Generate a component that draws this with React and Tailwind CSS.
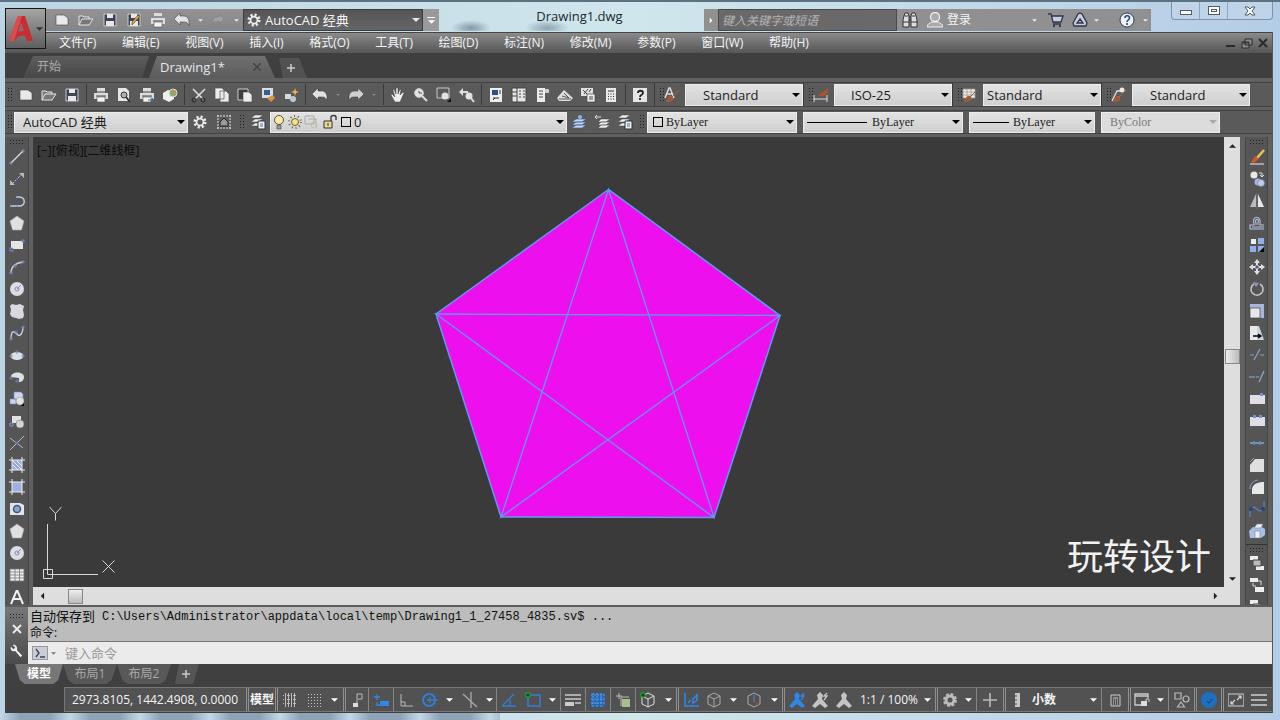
import clsx from 'clsx';

const page = <path d="M2 3h8l4 3v7H2z" fill="#e9e9e9" stroke="#444" strokeWidth=".6" />;
const folder = <path d="M1 13V4h4l1 1h5v2M1 13l3-6h11l-4 6z" fill="#777" stroke="#e4e4e4" />;
const disk = (
  <>
    <path d="M2 2h12v12H2z" fill="#3d4350" stroke="#c5cad6" />
    <path d="M5 2h6v4H5zM4 9h8v5H4z" fill="#e8e8e8" />
  </>
);
const printer = (
  <>
    <path d="M4 1h8v5H4zM1 6h14v6H1z" fill="#dcdcdc" />
    <path d="M3 9h10M4 5h8" stroke="#444" />
    <path d="M4 10h8v5H4z" fill="#f3f3f3" stroke="#555" strokeWidth=".6" />
  </>
);
const undo = <path d="M6 1v3h4c3 0 5 3 5 6v4c-1-3-2-4-5-4H6v3L0 7z" fill="#e2e2e2" stroke="#444" strokeWidth=".6" />;
const redo = <path d="M10 1v3H6c-3 0-5 3-5 6v4c1-3 2-4 5-4h4v3l6-6z" fill="#cfcfcf" stroke="#444" strokeWidth=".6" />;
const layers = <path d="M5 1h8l-4 3H1zM5 5h8l-4 3H1zM5 9h8l-4 3H1z" fill="#ededed" stroke="#444" strokeWidth=".5" />;
const gear = (
  <>
    <circle cx="8" cy="8" r="6" stroke="#eee" strokeWidth="3" strokeDasharray="2.4 2.3" />
    <circle cx="8" cy="8" r="4" stroke="#eee" strokeWidth="2" />
  </>
);
const brush = <path d="M15 3l-7 7M7 9c-3 0-2 4-5 5 3 1 7 0 7-3z" fill="#a8552b" stroke="#a8643c" />;
const cube = <path d="M8 1l6 3v8l-6 3-6-3V4zM2 4l6 3 6-3M8 7v8" stroke="currentColor" />;
const pentagon = <path d="M8 1l7 5-2.500 9h-9L1 6z" fill="#e0e0e0" stroke="#aaa" strokeWidth=".6" />;
const disc = (
  <>
    <circle cx="8" cy="8" r="7" fill="#dcdce2" />
    <circle cx="8" cy="8" r="2" stroke="#7f8ec4" />
    <path d="M8 8l4-4" stroke="#7f8ec4" />
  </>
);
const person = <path d="M8 0l3 3-1 4 6 7-3 2-5-4-5 4-3-2 6-7-1-4z" fill="currentColor" />;

const ICONS = {
  page,
  folder,
  disk,
  printer,
  undo,
  redo,
  layers,
  gear,
  cube,
  pentagon,
  disc,
  saveAs: <>{disk}<path d="M14 4l-6 7-2 2 0-3 6-7z" fill="#e8a552" stroke="#5a3b14" strokeWidth=".6" /></>,
  preview: (
    <>
      <path d="M2 1h8l3 3v10H2z" fill="#e6e6e6" />
      <circle cx="8" cy="8" r="3" fill="#a9b3bb" stroke="#333" />
      <path d="M10 10l4 5" stroke="#333" strokeWidth="2" />
    </>
  ),
  publish: <>{printer}<path d="M9 13h6M13 11l2 2-2 2" stroke="#3d68b4" /></>,
  dwf: (
    <>
      <path d="M1 6l5-3 6 2v7l-5 3-6-3z" fill="#eee" />
      <circle cx="11" cy="6" r="4" fill="#7fae7a" stroke="#e0e0e0" />
      <path d="M10 3l4 4" stroke="#d58a3c" strokeWidth="2" />
    </>
  ),
  cut: (
    <>
      <path d="M2 2l10 10M14 2L4 12" stroke="#e0e0e0" strokeWidth="1.500" />
      <circle cx="3" cy="13" r="2" stroke="#222" />
      <circle cx="12" cy="13" r="2" stroke="#222" />
    </>
  ),
  copy: <path d="M1 1h7l2 2v9H1zM6 4h6l3 3v8H6z" fill="#ececec" stroke="#555" strokeWidth=".7" />,
  paste: <><path d="M1 2h10v11H1z" fill="#3c3c3c" stroke="#ccc" /><path d="M6 5h6l3 3v7H6z" fill="#ececec" stroke="#444" strokeWidth=".6" /></>,
  match: <><path d="M2 1h11v10H2z" fill="#ddd" /><path d="M4 3h6v5H4z" fill="#2d5f9e" /><path d="M7 11l6-3 2 3-4 4z" fill="#d99345" /></>,
  block: <><path d="M2 7h6v5H2z" fill="#d8d8d8" /><circle cx="10" cy="12" r="3" fill="#bcc6da" /><path d="M12 1l1 3 3 1-3 1-1 3-1-3-3-1 3-1z" fill="#f0b04c" /></>,
  pan: <path d="M5 15L1 8l1-1 3 3-2-7 1-1 2 5V1h2v6l2-5 1 1-1 5 3-3 1 1-4 9z" fill="#eee" stroke="#444" strokeWidth=".5" />,
  zoom: <><circle cx="6" cy="6" r="4.500" fill="#e3e3e3" stroke="#bbb" /><path d="M6 4v2h3" stroke="#555" /><path d="M9 9l5 5" stroke="#ddd" strokeWidth="2" /></>,
  zoomWin: <><path d="M1 1h12v10H1z" stroke="#c8c8c8" /><circle cx="9" cy="9" r="3.500" fill="#e3e3e3" /><path d="M11 15h4v-4z" fill="#111" /></>,
  zoomPrev: <><path d="M0 5l4-4v3h5v2H4v3z" fill="#ddd" /><circle cx="10" cy="9" r="3.500" fill="#e3e3e3" /><path d="M12 11l3 4" stroke="#ddd" strokeWidth="2" /></>,
  props: <><path d="M2 1h12v14H2z" fill="#eee" /><path d="M4 3h6v5H4z" fill="#27528f" /><path d="M11 4h2M11 6h2M5 11h6M5 13l2-2" stroke="#333" /></>,
  design: <path d="M1 1h14v14H1zM6 1v14M1 5h5M1 9h5M8 4h2M12 4h2M8 7h2M12 7h2M8 10h2M12 10h2" fill="#e6e6e6" stroke="#444" />,
  palette: <><path d="M3 1h8v14H3z" fill="#ececec" /><path d="M11 2h4v4h-4z" fill="#ccc" /><path d="M5 4h4M5 7h4M5 10h4" stroke="#444" /></>,
  sheet: <><path d="M0 11l7-8 9 8-3 3H2z" fill="#ddd" /><path d="M5 9l7 2M7 6l5 5M2 12h12" stroke="#555" /></>,
  markup: <><path d="M1 1h12v8H1z" fill="#e0e0e0" /><path d="M3 3l5 5M8 2L4 7M11 2L9 5" stroke="#444" /><path d="M7 7h8v8H7z" fill="#eee" stroke="#444" strokeWidth=".7" /><path d="M9 10h4M9 12h4" stroke="#444" /></>,
  calc: <><path d="M3 1h10v14H3z" fill="#e9e9e9" /><path d="M5 4h6M5 7h1M7.500 7h1M10 7h1M5 9.500h1M7.500 9.500h1M10 9.500h1M5 12h1M7.500 12h1M10 12h1" stroke="#333" /></>,
  help: <><path d="M1 1h14v14H1z" fill="#e6e6e6" /><path d="M6 6c0-3 5-3 5 0 0 2-3 1.500-3 4M8 11v2" stroke="#222" strokeWidth="1.800" /></>,
  textStyle: <><path d="M1 11L5 1h1l4 10M3 7h5" stroke="#ddd" strokeWidth="1.500" />{brush}</>,
  dimStyle: <><path d="M1 8v7M14 8v7M1 12h13" stroke="#ddd" /><path d="M15 1L8 6l-3 3 6 0 4-4z" fill="#a8552b" /></>,
  tableStyle: <><path d="M1 2h12v9H1zM1 5h12M1 8h12M5 2v9M9 2v9" fill="#f0f0f0" stroke="#999" strokeWidth=".8" />{brush}</>,
  leaderStyle: <><path d="M1 14L6 4h3" stroke="#ddd" strokeWidth="1.300" /><circle cx="11" cy="3" r="2.500" fill="#e8e8e8" />{brush}</>,
  frame: <><path d="M1 2h14M1 14h14M2 1v14M14 1v14" stroke="#ddd" strokeDasharray="2 1" /><path d="M4 12V8l4-4 4 4v4z" fill="#999" stroke="#222" /></>,
  layerProps: <>{layers}<path d="M8 7h7v8H8z" fill="#eee" stroke="#333" /><path d="M10 10h3M10 12h3" stroke="#4272b4" /></>,
  layerCur: <><path d="M5 5h10l-4 3H1zM5 8h10l-4 3H1zM5 11h10l-4 3H1z" fill="#c3d4ee" stroke="#37588c" strokeWidth=".6" /><circle cx="9" cy="3" r="2" fill="#8fb4e8" /></>,
  layerPrev: <><path d="M7 5h9l-4 3H4zM7 8h9l-4 3H4zM7 11h9l-4 3H4z" fill="#eee" stroke="#444" strokeWidth=".5" /><path d="M1 3h6M3 1L1 3l2 2" stroke="#ddd" /></>,
  bulb: <><circle cx="8" cy="6" r="4.500" fill="#f7ecaa" stroke="#5c552a" /><path d="M6 11h4v4H6z" fill="#999" stroke="#444" strokeWidth=".6" /></>,
  sun: <><circle cx="8" cy="8" r="6" stroke="#6b6130" strokeWidth="2" strokeDasharray="1 2.800" /><circle cx="8" cy="8" r="3.500" fill="#f6e08a" stroke="#6b6130" /></>,
  vpFreeze: <><path d="M2 2h9v8H2zM5 5h8v8" stroke="#aaa" /><circle cx="11" cy="11" r="3" stroke="#c5c19d" /></>,
  lock: <><path d="M1 7h8v7H1z" fill="#e7dc92" stroke="#333" /><path d="M8 7V3c0-2 5-2 5 0v3" stroke="#333" strokeWidth="1.300" /><path d="M5 9v3" stroke="#333" /></>,
  binoculars: (
    <>
      <path d="M2 4l1-3h3l1 3v11H1V8zM14 4l-1-3h-3L9 4v11h6V8z" fill="#dedede" stroke="#333" />
      <path d="M1 10h6M9 10h6M7 5h2M7 8h2M3 4h3M10 4h3" stroke="#333" />
    </>
  ),
  user: <><circle cx="8" cy="5" r="4.500" fill="#aaa" stroke="#eee" strokeWidth="1.300" /><path d="M0 15c0-3 3-4 5-5h6c2 1 5 2 5 5z" fill="#aaa" stroke="#eee" /></>,
  cart: <><path d="M0 2h3l2 8h8l2-6H4M5 12h8" fill="#c9cdd8" stroke="#2d3450" strokeWidth="1.300" /><circle cx="6" cy="14" r="1" fill="#222" /><circle cx="12" cy="14" r="1" fill="#222" /></>,
  a360: <path d="M8 1l2 1 5 9-1 3H2l-1-3 5-9zM8 7l3 4H5z" fill="#c9cdd8" stroke="#2d3450" strokeWidth="1.300" />,
  helpRound: <><circle cx="8" cy="8" r="7" fill="#eef1f6" stroke="#2c3c5c" /><path d="M6 6c0-3 4.500-3 4.500 0C10.500 8 8 8 8 10M8 11v2" stroke="#24457d" strokeWidth="1.600" /></>,
  line: <><path d="M2 14L14 2" stroke="#ddd" strokeWidth="1.300" /><path d="M1 13h2v2H1zM13 1h2v2h-2z" stroke="#8b95c4" strokeWidth=".8" /></>,
  xline: <><path d="M3 13L13 3" stroke="#bbb" strokeDasharray="3 1" /><path d="M10 2h5v5zM1 9v5h5z" fill="#bbb" /><path d="M7 7h2v2H7z" fill="#4f6fc0" /></>,
  pline: <><path d="M1 13h9c7 0 7-9 0-9H8" stroke="#c5cfe0" strokeWidth="1.500" /><path d="M1 12h2v2H1zM7 12h2v2H7zM7 3h2v2H7z" fill="#86a3e2" /></>,
  rect: <><path d="M2 4h12v8H2z" fill="#e4e4e4" /><path d="M1 11h3v3H1zM13 3h2v2h-2z" fill="#3e5a94" stroke="#88a0dd" strokeWidth=".7" /></>,
  arc: <><path d="M2 14C2 8 6 4 14 3" stroke="#c9c9d2" strokeWidth="1.400" /><path d="M1 13h2v2H1zM5 6h2v2H5zM13 2h2v2h-2z" stroke="#6f86cc" strokeWidth=".8" /></>,
  cloud: <path d="M3 1l4 1 4-1 4 2-1 4 1 5-1 3-4 1-3-1-4-1-2-3 1-4-1-4z" fill="#dadade" />,
  spline: <><path d="M2 14C2 2 7 8 9 10s5-2 5-8" stroke="#c9cede" strokeWidth="1.400" /><path d="M1 13h2v2H1zM6 6h2v2H6zM13 1h2v2h-2z" stroke="#6b86cf" strokeWidth=".8" /></>,
  ellipse: <><ellipse cx="8" cy="9" rx="6.500" ry="4" fill="#dde1e4" /><path d="M7 4h2v2H7zM1 8h2v2H1zM13 8h2v2h-2z" stroke="#6b86cf" strokeWidth=".8" /></>,
  ellipseArc: <><path d="M2 8c0-6 13-6 13 0 0 4-3 5-5 5V9z" fill="#dde1e4" /><path d="M1 8h2v2H1zM7 11h2v2H7z" stroke="#6b86cf" strokeWidth=".8" /></>,
  insert: <><path d="M5 1h7l2 2v5H5zM1 8h6v5H1z" fill="#cdd6e8" stroke="#6b86b8" strokeWidth=".6" /><circle cx="11" cy="10" r="4" fill="#e2e2e2" stroke="#888" strokeWidth=".5" /><path d="M12 15h3v-3z" fill="#000" /></>,
  makeBlock: <><path d="M3 3h9v7H3z" fill="#e2e2e2" /><circle cx="11" cy="11" r="4" fill="#d5d5d5" stroke="#777" strokeWidth=".6" /><path d="M1 10h3v3H1z" stroke="#7d9be0" /></>,
  point: <><path d="M1 15L15 1M1 3l13 10" stroke="#bbb" /><path d="M7 7h2v2H7z" stroke="#5577c4" /></>,
  hatch: <><path d="M3 3h10v10H3z" fill="#93a9da" /><path d="M4 4l9 9M8 4l5 5M4 8l5 5" stroke="#e9eefa" /><path d="M0 3h16M0 13h16M3 0v16M13 0v16" stroke="#eee" /></>,
  gradient: <><path d="M3 3h10v10H3z" fill="#9db0e0" /><path d="M0 3h16M0 13h16M3 0v16M13 0v16" stroke="#eee" /></>,
  region: <><path d="M1 2h10l4 2v10H1z" fill="#dfe5ea" /><circle cx="8" cy="8" r="3.500" fill="#8ba6c9" stroke="#41597e" strokeWidth="1.500" /></>,
  table: <path d="M1 2h14v12H1zM1 5h14M1 8h14M1 11h14M6 2v12M10.500 2v12" fill="#eee" stroke="#777" strokeWidth=".8" />,
  mtext: <path d="M2 15L7.500 2h1L14 15M4 10h8" stroke="#f0f0f0" strokeWidth="2" />,
  erase: <><path d="M15 1l-7 8" stroke="#e8c15a" strokeWidth="2.500" /><path d="M2 13l4-6 4 3-5 4z" fill="#d0572b" /><path d="M1 15h14" stroke="#eee" /></>,
  copyObj: <><circle cx="5" cy="4" r="3.500" fill="#e8e8e8" /><circle cx="9" cy="11" r="3.500" fill="#a9b9dd" /><circle cx="12" cy="12" r="3.500" fill="#c1cce8" stroke="#667bae" strokeWidth=".6" /><path d="M10 2h3v4M11 4l2 2 2-2" stroke="#ddd" /></>,
  mirror: <><path d="M7 1v13H1z" fill="#b9bcc3" /><path d="M9 1v13h6z" fill="#e8e8e8" /><path d="M8 0v16" stroke="#777" /></>,
  offset: <path d="M15 14H1v-4h4V9C2 0 13 0 11 9v1h4M15 12H3M7 10V8c-2-5 4-5 2 0v2" stroke="#b5c3e4" strokeWidth="1.100" />,
  array: <><path d="M2 2h5v5H2z" fill="#eee" /><path d="M9 1h6v6H9zM1 9h6v6H1zM9 9h6v6H9z" fill="#8fb0e6" /><path d="M10 15h5v-5z" fill="#000" /></>,
  move: <><path d="M8 0l3 4H9v2H7V4H5zM8 16l3-4H9v-2H7v2H5zM0 8l4-3v2h2v2H4v2zM16 8l-4-3v2h-2v2h2v2z" fill="#e0e0e0" /><path d="M6.500 6.500h3v3h-3z" stroke="#8fa0d8" /></>,
  rotate: <><path d="M5 3a6 6 0 1 0 6 0" stroke="#c4c4c4" strokeWidth="1.600" /><path d="M4 1l6 1-3 4z" fill="#8b93c8" /></>,
  scale: <><path d="M1 1h14v14H1z" fill="#a9b6d8" /><path d="M1 5h10v10H1z" fill="#e6e6ee" stroke="#444" strokeWidth=".7" /></>,
  stretch: <><path d="M1 1h9l5 14H1z" fill="#c6d3df" /><path d="M1 1h7v14H1z" fill="#e9e9e9" /><path d="M4 11h7M9 9l3 2-3 2" stroke="#000" strokeWidth="1.300" /></>,
  trim: <path d="M1 8h4M11 8h4M5 13l6-11" stroke="#8fa2c8" strokeWidth="1.200" />,
  extend: <path d="M0 8h6M7 8h3M10 13l5-11" stroke="#8fa9d8" strokeWidth="1.200" />,
  breakPt: <><path d="M1 4h15v9H1z" fill="#dedee4" /><path d="M11 2h3v3h-3z" fill="#7391d6" /></>,
  breakObj: <><path d="M1 4h15v9H1z" fill="#dedee4" /><path d="M4 2h3v3H4zM10 2h3v3h-3z" fill="#7391d6" /></>,
  join: <><path d="M1 8h14" stroke="#b8cbee" /><path d="M5 6l2 2-2 2zM11 6L9 8l2 2z" fill="#5b8be0" stroke="#5b8be0" /></>,
  chamfer: <><path d="M6 2h9v13H1V8z" fill="#dfdfdf" /><path d="M1 5l4-4" stroke="#8fa2d4" /></>,
  fillet: <><path d="M15 3v12H3V10c1-5 5-7 12-7z" fill="#e4e8e8" /><path d="M1 10c0-5 3-8 8-9" stroke="#8fa2d4" /></>,
  blend: <><path d="M1 16v-6M15 0v6M3 8c3-7 6 7 11 0" stroke="#5b83c4" strokeWidth="1.200" /><circle cx="2" cy="8" r="2" fill="#24457d" /><circle cx="14" cy="8" r="2" fill="#24457d" /></>,
  explode: <><path d="M0 8l4-4h9l3 2v6l-4 3H1z" fill="#a9c0e6" /><path d="M5 5l3-4h6l-2 4zM6 8h5v7H6z" fill="#eee" stroke="#6f86b0" strokeWidth=".6" /></>,
  order: <><path d="M1 1h8v4H1zM7 11h8v4H7z" fill="#eee" /><path d="M4 5h8v6H4z" fill="#bbb" stroke="#444" /></>,
  orderBack: <><path d="M1 1h8v4H1zM6 10h9v5H6z" fill="#eee" /><path d="M4 6v3h3M9 4h3v4" stroke="#ddd" /></>,
  grid: (
    <>
      <path d="M3.500 1v14M6.500 1v14M9.500 1v14M12.500 1v14" stroke="#bbb" />
      <path d="M1 3.500h14M1 7.500h14M1 11.500h14" stroke="#bbb" strokeDasharray="1 1" />
    </>
  ),
  snap: <path d="M2 2.500h13M2 5.500h13M2 8.500h13M2 11.500h13M2 14.500h13" stroke="#c8c8c8" strokeDasharray="1 2" />,
  infer: <><path d="M8 12V2h5v5H9" stroke="#bbb" /><path d="M4 11h5v4H4z" fill="#ddd" /></>,
  dynamic: <><path d="M1 5h6M4 2v6M4 10v3h3" stroke="#2f86e4" strokeWidth="1.300" /><path d="M7 9h9v5H7z" fill="#2f86e4" /></>,
  ortho: <path d="M3 2v12h12M3 10h4v4" stroke="#bbb" />,
  polar: <><circle cx="7" cy="8" r="6" stroke="#2f7fd8" strokeWidth="2" /><path d="M5 8h11M8 5v6" stroke="#2f7fd8" strokeWidth="1.300" /></>,
  iso: <path d="M9 0v16M1 2l14 13" stroke="#aaa" strokeWidth="1.300" />,
  otrack: <path d="M1 14h14M2 13L13 2M9 8v6" stroke="#2f7fd8" strokeWidth="1.400" />,
  osnap: <><path d="M3 3h12v11H3z" stroke="#2f7fd8" strokeWidth="1.500" /><path d="M1 1h4v4H1z" fill="#0f4a17" stroke="#19b02d" /></>,
  lwt: <><path d="M0 3h16M0 7h16M10 11h6" stroke="#ccc" strokeWidth="1.500" /><path d="M0 12h9" stroke="#ccc" strokeWidth="4" /></>,
  transp: <><path d="M1 1h14v14H1z" fill="#2768b4" /><path d="M1 3h14M1 7h14M1 11h14M3 1v14M7 1v14M11 1v14" stroke="#5c9de6" strokeDasharray="2 1" /></>,
  cycle: <><path d="M4 1v6M1 4h6M6 14V5h8" stroke="#bbb" /><path d="M7 7h8v8H7z" fill="#a5c08d" /></>,
  osnap3d: <>{cube}<path d="M1 1h4v4H1z" fill="#0f4a17" stroke="#19b02d" /></>,
  ducs: <path d="M2 1v13h14M5 11l3-3M10 7l4-4v5c-1 2-3 2-4 3z" stroke="#2f86e4" strokeWidth="1.600" />,
  gizmo: <><path d="M8 1l6 3v8l-6 3-6-3V4z" stroke="#aaa" /><path d="M8 3v7" stroke="#4f87cf" /><path d="M8 9l5 4" stroke="#c0453d" /></>,
  person,
  personBolt: <>{person}<path d="M15 1l-3 3h3l-3 4" stroke="currentColor" strokeWidth="1.300" /></>,
  cog: <><circle cx="8" cy="8" r="5.500" stroke="#bbb" strokeWidth="3" strokeDasharray="2.600 1.700" /><circle cx="8" cy="8" r="4" stroke="#bbb" strokeWidth="3" /></>,
  plus: <path d="M8 1v14M1 8h14" stroke="#bbb" strokeWidth="1.600" />,
  ruler: <><path d="M6 1h5v14H6z" fill="#c8c8c8" /><path d="M6 4h2M6 8h2M6 12h2" stroke="#444" /></>,
  qprops: <path d="M4 3h9v11H4zM6 6h5M6 8h1M8 8h1M10 8h1M6 10h1M8 10h1M10 10h1M6 12h1M8 12h1M10 12h1" stroke="#ccc" />,
  uiLock: <><path d="M7 13H1V2h13v4M1 4h13" stroke="#ccc" strokeWidth="1.300" /><path d="M7 9h6v5H7z" fill="#ddd" /><path d="M12 9V7h3v3" stroke="#ccc" /></>,
  isolate: <><path d="M1 1h6v6H1zM7 10l3.500 5h-7z" stroke="#bbb" strokeWidth="1.200" /><circle cx="12" cy="7" r="3" stroke="#bbb" strokeWidth="1.200" /></>,
  hw: <><circle cx="8" cy="8" r="8" fill="#1f6fc0" /><path d="M6 9l2 2 3-4" stroke="#0d3d77" /></>,
  expand: <path d="M0 2h16v12H0zM3 12l4-4M3 9v3h3M13 4L9 8M10 4h3v3" stroke="#d0d0d0" strokeWidth="1.200" />,
  menu: <path d="M0 3h16M0 8h16M0 13h16" stroke="#d0d0d0" strokeWidth="1.600" />,
  wrench: <path d="M3 1l3 3-2 2-3-3c-1 4 2 6 5 5l6 7 2-2-6-6c1-4-2-7-5-6z" fill="#eee" />,
};

const Icon = ({ name, className = 'size-4' }) => (
  <svg viewBox="0 0 16 16" fill="none" className={clsx('shrink-0', className)} aria-hidden="true">
    {ICONS[name]}
  </svg>
);

const Tool = ({ name, className, icon }) => (
  <button aria-label={name} className={clsx('flex items-center justify-center shrink-0', className)}>
    <Icon name={name} className={icon} />
  </button>
);

const Caret = ({ className }) => (
  <svg viewBox="0 0 8 4" className={clsx('shrink-0', className)} aria-hidden="true">
    <path d="M0 0h8L4 4z" fill="currentColor" />
  </svg>
);

const ArrowBtn = ({ className, caret = 'w-[5px] h-[3px] text-gray-200' }) => (
  <button aria-label="More" className={clsx('flex items-center justify-center shrink-0', className)}>
    <Caret className={caret} />
  </button>
);

const Grip = () => (
  <span className="w-[5px] h-4 shrink-0 bg-[radial-gradient(#222_1px,transparent_1px)] bg-[size:3px_3px]" />
);

const HGrip = () => (
  <span className="w-4 h-[5px] shrink-0 bg-[radial-gradient(#222_1px,transparent_1px)] bg-[size:3px_3px]" />
);

const Combo = ({ label, value, className, pad, tone, caret = 'text-black', disabled, children }) => (
  <div className={clsx('relative shrink-0', className)}>
    <select
      aria-label={label}
      disabled={disabled}
      className={clsx('appearance-none block w-full h-full leading-4 opacity-100', pad,
        tone || 'bg-linear-to-b from-[#e2e2e2] to-[#cfcfcf] text-[#1c1c1c] border border-[#ececec]')}
    >
      <option>{value}</option>
    </select>
    {children}
    <Caret className={clsx('absolute right-[3px] top-1/2 -mt-[2px] w-2 h-1 pointer-events-none', caret)} />
  </div>
);

const MENUS = ['文件(F)', '编辑(E)', '视图(V)', '插入(I)', '格式(O)', '工具(T)', '绘图(D)', '标注(N)', '修改(M)', '参数(P)', '窗口(W)', '帮助(H)'];

const STANDARD_TOOLS = [
  'page', 'folder', 'disk', '|', 'printer', 'preview', 'publish', 'dwf', '|',
  'cut', 'copy', 'paste', 'match', 'block', '|', 'undo', 'v', 'redo', 'v', '|',
  'pan', 'zoom', 'zoomWin', 'zoomPrev', '|',
  'props', 'design', 'palette', 'sheet', 'markup', 'calc', '|', 'help',
];

const STYLE_TOOLS = [
  { icon: 'textStyle', label: 'Text style', value: 'Standard', pad: 'pl-[17px]' },
  { icon: 'dimStyle', label: 'Dimension style', value: 'ISO-25', pad: 'pl-4' },
  { icon: 'tableStyle', label: 'Table style', value: 'Standard', pad: 'pl-[3px]' },
  { icon: 'leaderStyle', label: 'Multileader style', value: 'Standard', pad: 'pl-[17px]' },
];

const DRAW_TOOLS = [
  'line', 'xline', 'pline', 'pentagon', 'rect', 'arc', 'disc', 'cloud', 'spline', 'ellipse', 'ellipseArc',
  'insert', 'makeBlock', 'point', 'hatch', 'gradient', 'region', 'pentagon', 'disc', 'table', 'mtext',
];

const MODIFY_TOOLS = [
  'erase', 'copyObj', 'mirror', 'offset', 'array', 'move', 'rotate', 'scale', 'stretch',
  'trim', 'extend', 'breakPt', 'breakObj', 'join', 'chamfer', 'fillet', 'blend', 'explode',
];

const STATUS = [
  { icon: 'grid', w: 'w-6' },
  { icon: 'snap', w: 'w-6' },
  { w: 'w-[17px]' },
  { icon: 'infer', w: 'w-[25px]', sep: 2 },
  { icon: 'dynamic', w: 'w-[25px]', sep: 1 },
  { icon: 'ortho', w: 'w-[25px]', sep: 1 },
  { icon: 'polar', w: 'w-6' },
  { w: 'w-[15px]' },
  { icon: 'iso', w: 'w-[25px]' },
  { w: 'w-[14px]' },
  { icon: 'otrack', w: 'w-[25px]', sep: 1 },
  { icon: 'osnap', w: 'w-6' },
  { w: 'w-[15px]' },
  { icon: 'lwt', w: 'w-[25px]', sep: 1 },
  { icon: 'transp', w: 'w-[25px]', sep: 1 },
  { icon: 'cycle', w: 'w-[25px]', sep: 1 },
  { icon: 'osnap3d', w: 'w-[25px]', sep: 1, color: 'text-[#ddd]' },
  { w: 'w-4' },
  { icon: 'ducs', w: 'w-[26px]', sep: 2 },
  { icon: 'cube', w: 'w-6', color: 'text-[#aaa]' },
  { w: 'w-[15px]' },
  { icon: 'gizmo', w: 'w-[25px]' },
  { w: 'w-4' },
  { icon: 'personBolt', w: 'w-[26px]', sep: 2, color: 'text-[#2f86e4]' },
  { icon: 'personBolt', w: 'w-6', color: 'text-[#c4c4c4]' },
  { icon: 'person', w: 'w-6', color: 'text-[#c4c4c4]' },
  { text: '1:1 / 100%', w: 'w-[63px]' },
  { w: 'w-4' },
  { icon: 'cog', w: 'w-[26px]', sep: 2 },
  { w: 'w-[15px]' },
  { icon: 'plus', w: 'w-[27px]', sep: 1 },
  { icon: 'ruler', w: 'w-[25px]', sep: 2 },
  { text: '小数', w: 'w-[57px]', bold: true },
  { w: 'w-4' },
  { icon: 'qprops', w: 'w-[27px]', sep: 1 },
  { icon: 'uiLock', w: 'w-[25px]', sep: 2 },
  { w: 'w-[15px]' },
  { icon: 'isolate', w: 'w-[26px]', sep: 1 },
  { icon: 'hw', w: 'w-[27px]', sep: 2 },
  { icon: 'expand', w: 'w-[26px]', sep: 2 },
  { icon: 'menu', w: 'w-6' },
];

function TitleBar() {
  return (
    <div className="h-8 flex items-end pl-[46px] pr-[7px] pb-px border-t-2 border-[#5d7280]">
      <div className="h-[22px] flex items-center pl-1 bg-linear-to-b from-[#939393] to-[#858585] shrink-0">
        {['page', 'folder', 'disk', 'saveAs', 'printer', 'undo'].map((n) => <Tool key={n} name={n} className="w-6" />)}
        <ArrowBtn className="w-3" />
        <Tool name="redo" className="w-6 opacity-30" icon="size-3" />
        <ArrowBtn className="w-[13px]" />
        <Combo label="Workspace" value="AutoCAD 经典" className="w-[180px] h-full" pad="pl-[21px] text-[13px]"
          tone="bg-linear-to-b from-[#555] to-[#666] border border-[#3c3c3c] text-gray-100" caret="text-gray-200">
          <Icon name="gear" className="absolute left-1 top-1 size-[14px]" />
        </Combo>
        <button aria-label="Customize" className="w-4 h-full bg-[#9a9a9a] flex flex-col items-center justify-center gap-[2px]">
          <span className="w-2 h-px bg-white" />
          <Caret className="w-[7px] h-1 text-white" />
        </button>
      </div>
      <h1 className="flex-1 h-full flex items-center justify-center pl-4 text-[13px] text-[#1d2830] bg-[radial-gradient(ellipse_20px_8px_at_32px_26px,#8497a8,transparent),radial-gradient(ellipse_22px_8px_at_108px_26px,#8fa2b2,transparent)]">Drawing1.dwg</h1>
      <div className="h-[22px] flex items-center bg-[#909090] shrink-0">
        <button aria-label="Collapse" className="w-[14px] h-full flex items-center justify-center">
          <Caret className="w-[6px] h-[3px] text-white -rotate-90" />
        </button>
        <input aria-label="Search" placeholder="键入关键字或短语"
          className="w-[179px] h-full bg-[#696969] border border-[#4a4a4a] pl-[3px] text-xs italic placeholder:text-[#b5b5b5]" />
        <Tool name="binoculars" className="w-[26px]" />
        <Tool name="user" className="w-6" />
        <button className="w-[77px] text-left text-xs text-gray-100">登录</button>
        <ArrowBtn className="w-5" />
        <Tool name="cart" className="w-6" />
        <Tool name="a360" className="w-6" />
        <ArrowBtn className="w-2" />
        <span className="w-[15px]" />
        <Tool name="helpRound" className="w-6" />
        <ArrowBtn className="w-3" />
      </div>
      <div className="ml-5 flex self-start h-[18px] w-[102px] shrink-0 rounded-b border border-t-0 border-[#7d93a8] bg-[#c3d6ea]/70 text-[#4f5b66]">
        <button aria-label="Minimize" className="w-7 flex items-center justify-center border-r border-[#93a6b8]">
          <span className="w-3 h-[5px] border border-[#4f5b66] bg-white mt-1" />
        </button>
        <button aria-label="Maximize" className="w-7 flex items-center justify-center border-r border-[#93a6b8]">
          <span className="w-3 h-[9px] border border-[#4f5b66] bg-white flex items-center justify-center">
            <span className="w-[6px] h-[3px] border border-[#4f5b66]" />
          </span>
        </button>
        <button aria-label="Close" className="flex-1 flex items-center justify-center">
          <svg viewBox="0 0 12 10" className="w-3 h-[10px]">
            <path d="M1 1h3l2 2 2-2h3L8 5l3 4H8L6 7 4 9H1l3-4z" fill="#fff" stroke="currentColor" />
          </svg>
        </button>
      </div>
    </div>
  );
}

function MenuBar() {
  return (
    <nav className="h-[21px] flex items-center pl-[54px] pr-[1px] border-t border-[#444] bg-linear-to-b from-[#8b8b8b] to-[#555] text-xs text-gray-100">
      <div className="w-[750px] flex justify-between">
        {MENUS.map((m) => <button key={m} className="whitespace-nowrap">{m}</button>)}
      </div>
      <span className="flex-1" />
      <button aria-label="Minimize drawing" className="w-4 h-3 flex items-end justify-center pb-[2px]">
        <span className="w-[9px] h-[2px] bg-[#2b2b2b]" />
      </button>
      <button aria-label="Restore drawing" className="w-[17px] flex justify-center">
        <svg viewBox="0 0 12 11" className="w-3 h-[11px]" fill="#8b8b8b" stroke="#2b2b2b">
          <path d="M4 1h7v6H4zM1 4h7v6H1zM1 5h7" />
        </svg>
      </button>
      <button aria-label="Close drawing" className="w-4 flex justify-center">
        <svg viewBox="0 0 10 10" className="size-[10px]"><path d="M1 1l8 8M9 1L1 9" stroke="#2b2b2b" strokeWidth="2" /></svg>
      </button>
    </nav>
  );
}

function FileTabs() {
  return (
    <div className="h-[25px] flex items-end pl-[18px] bg-[#3f3f3f] text-[13px] leading-5">
      <button className="w-[126px] h-[22px] pl-[14px] text-left text-xs text-[#aaa] bg-linear-to-b from-[#5d5d5d] to-[#484848] [clip-path:polygon(10px_0,100%_0,119px_100%,0_100%)]">开始</button>
      <div className="w-[126px] h-[22px] pl-[11px] pr-[12px] flex items-center justify-between text-gray-200 bg-linear-to-b from-[#707070] to-[#5c5c5c] [clip-path:polygon(8px_0,116px_0,100%_100%,0_100%)]">
        <button>Drawing1*</button>
        <button aria-label="Close tab" className="pr-[2px]">
          <svg viewBox="0 0 8 8" className="size-2"><path d="M0 0l8 8M8 0L0 8" stroke="#444" strokeWidth="1.500" /></svg>
        </button>
      </div>
      <button aria-label="New tab" className="w-8 h-[20px] flex items-center justify-center bg-[#525252] [clip-path:polygon(4px_0,24px_0,100%_100%,8px_100%)]">
        <svg viewBox="0 0 8 8" className="size-2"><path d="M4 0v8M0 4h8" stroke="#ccc" strokeWidth="1.500" /></svg>
      </button>
    </div>
  );
}

function Toolbars() {
  const row = 'flex items-center border-y border-[#424242] bg-[#5a5a5a]';
  return (
    <div className="bg-[#606060] pt-1 pb-[3px] flex flex-col gap-[3px] text-xs">
      <div className={clsx(row, 'h-[25px]')}>
        <span className="w-[9px] flex justify-center shrink-0"><Grip /></span>
        {STANDARD_TOOLS.map((t, i) => {
          if (t === '|') return <span key={i} className="w-[6px] h-[21px] shrink-0 flex justify-center"><span className="w-px bg-[#3a3a3a]" /></span>;
          if (t === 'v') return <ArrowBtn key={i} className="w-[13px]" caret="w-1 h-[2px] text-[#888]" />;
          return <Tool key={i} name={t} className="w-[23px]" />;
        })}
        <span className="w-[3px] shrink-0" />
        {STYLE_TOOLS.map((s) => (
          <div key={s.icon} className="flex items-center h-[23px] shrink-0">
            <span className="w-[31px] h-full flex items-center justify-between pl-1 pr-[5px] border-l border-[#3a3a3a]">
              <Grip />
              <Icon name={s.icon} />
            </span>
            <Combo label={s.label} value={s.value} className="w-[118px] h-[22px]" pad={clsx(s.pad, 'text-[13px]')} />
          </div>
        ))}
      </div>

      <div className={clsx(row, 'h-6')}>
        <span className="w-[9px] flex justify-center shrink-0"><Grip /></span>
        <Combo label="Workspace" value="AutoCAD 经典" className="w-[174px] h-[21px]" pad="pl-2 text-[13px]" />
        <Tool name="gear" className="w-6" icon="size-[14px]" />
        <Tool name="frame" className="w-6" />
        <span className="w-[10px] flex justify-center shrink-0"><Grip /></span>
        <Tool name="layerProps" className="w-[24px]" />
        <Combo label="Layer" value="0" className="w-[297px] h-[21px]" pad="pl-[83px] text-[13px]">
          <div className="absolute left-[1px] top-[2px] flex items-center pointer-events-none">
            <Icon name="bulb" />
            <Icon name="sun" />
            <Icon name="vpFreeze" />
            <span className="w-1" />
            <Icon name="lock" />
            <span className="w-[10px] h-[10px] border border-black ml-[2px]" />
          </div>
        </Combo>
        <Tool name="layerCur" className="w-[23px]" />
        <Tool name="layerPrev" className="w-[23px]" />
        <Tool name="layerProps" className="w-[23px]" />
        <span className="w-[11px] flex justify-center shrink-0"><Grip /></span>
        <div className="flex items-center gap-[6px] font-['Liberation_Serif','Noto_Sans_CJK_SC',serif] shrink-0">
          <Combo label="Color" value="ByLayer" className="w-[150px] h-[21px]" pad="pl-[18px]">
            <span className="absolute left-[6px] top-[5px] w-[10px] h-[10px] border border-black pointer-events-none" />
          </Combo>
          <Combo label="Linetype" value="ByLayer" className="w-[160px] h-[21px]" pad="pl-[68px]">
            <span className="absolute left-1 top-[10px] w-[60px] h-px bg-black pointer-events-none" />
          </Combo>
          <Combo label="Lineweight" value="ByLayer" className="w-[126px] h-[21px]" pad="pl-[43px]">
            <span className="absolute left-1 top-[10px] w-9 h-px bg-black pointer-events-none" />
          </Combo>
          <Combo label="Plot style" value="ByColor" disabled className="w-[119px] h-[21px]" pad="pl-2"
            tone="bg-[#dcdcdc] text-[#7a7a7a] border border-[#eee]" caret="text-[#aaa]" />
        </div>
      </div>
    </div>
  );
}

function Drawing() {
  return (
    <div className="relative flex-1 min-h-0 min-w-0 bg-[#3a3a3a] overflow-hidden">
      <svg viewBox="33 137 1191 450" className="absolute inset-0 w-full h-full" fill="none" role="img" aria-label="Pentagon with star">
        <path d="M608.500 189.500L436 314L501 517L714 517.500L780 315.500Z" fill="#ee0fee" stroke="#5b9bf0" strokeWidth="1.500" />
        <path d="M608.500 189.500L501 517L780 315.500L436 314L714 517.500Z" stroke="#5b9bf0" strokeWidth="1.300" />
        <path d="M47.500 524v50.500H98M43.500 569.500h9v9h-9zM49.500 507l6 6.500v7M61.500 507l-6 6.500M102.500 560.500l12 12M114.500 560.500l-12 12" stroke="#d8d8d8" />
      </svg>
      <p className="absolute left-1 top-[6px] text-xs leading-4 text-[#0c0c0c]">[−][俯视][二维线框]</p>
      <p className="absolute right-[13px] bottom-[6px] text-[36px] leading-[48px] text-[#f2f2f2]">玩转设计</p>
    </div>
  );
}

function WorkArea() {
  return (
    <div className="flex-1 min-h-0 flex bg-[#606060]">
      <div className="w-6 shrink-0 overflow-hidden flex flex-col items-center pt-[2px] bg-[#555] border-r border-[#444]">
        <HGrip />
        <span className="h-[2px] shrink-0" />
        {DRAW_TOOLS.map((t, i) => <Tool key={i} name={t} className="h-[22px] w-6" />)}
      </div>
      <div className="w-1 shrink-0" />
      <div className="flex-1 min-w-0 flex flex-col">
        <div className="flex-1 min-h-0 flex">
          <Drawing />
          <div className="w-4 shrink-0 bg-[#dedede] flex flex-col items-center text-[#222]">
            <button aria-label="Scroll up" className="h-[18px] flex items-center"><Caret className="w-[7px] h-1 rotate-180" /></button>
            <span className="flex-16" />
            <span className="w-[15px] h-[15px] border border-[#888] bg-linear-to-r from-[#eee] to-[#bbb]" />
            <span className="flex-17" />
            <button aria-label="Scroll down" className="h-[17px] flex items-center"><Caret className="w-[7px] h-1" /></button>
          </div>
        </div>
        <div className="h-[18px] shrink-0 bg-[#dedede] flex items-center pr-4 text-[#222]">
          <button aria-label="Scroll left" className="w-[18px] flex justify-center"><Caret className="w-[7px] h-1 rotate-90" /></button>
          <span className="w-[17px]" />
          <span className="w-[15px] h-[15px] border border-[#888] bg-linear-to-b from-[#eee] to-[#bbb]" />
          <span className="flex-1" />
          <button aria-label="Scroll right" className="w-[18px] flex justify-center"><Caret className="w-[7px] h-1 -rotate-90" /></button>
        </div>
      </div>
      <div className="w-[5px] shrink-0" />
      <div className="w-[23px] shrink-0 overflow-hidden flex flex-col items-center pt-[2px] bg-[#555] border-x border-[#444]">
        <HGrip />
        <span className="h-[2px] shrink-0" />
        {MODIFY_TOOLS.map((t) => <Tool key={t} name={t} className="h-[22px] w-5" />)}
        <span className="w-full h-px mt-[2px] bg-[#333] shrink-0" />
        <span className="h-[2px] shrink-0" />
        <HGrip />
        {['order', 'orderBack', 'order'].map((t, i) => <Tool key={i} name={t} className="h-[22px] w-5" />)}
      </div>
      <div className="w-1 shrink-0" />
    </div>
  );
}

function CommandLine() {
  return (
    <div className="flex border-t-2 border-[#5c5c5c] bg-[#bcbcbc]">
      <div className="w-[23px] shrink-0 flex flex-col items-center pt-[6px] bg-linear-to-b from-[#777] to-[#4a4a4a]">
        <HGrip />
        <button aria-label="Close command line" className="h-[22px] flex items-center">
          <svg viewBox="0 0 10 10" className="size-[10px]"><path d="M1 1l8 8M9 1L1 9" stroke="#eee" strokeWidth="1.800" /></svg>
        </button>
        <Tool name="wrench" className="h-[22px]" icon="size-[14px]" />
      </div>
      <div className="flex-1 min-w-0">
        <div className="h-[35px] pt-px pl-[2px] border-b border-[#777] text-[13px] leading-4 text-[#111]">
          <p className="whitespace-nowrap flex gap-[7px]">
            自动保存到
            <span className="text-xs leading-[18px] font-['Liberation_Mono',monospace]">C:\Users\Administrator\appdata\local\temp\Drawing1_1_27458_4835.sv$ ...</span>
          </p>
          <p className="text-xs leading-[14px]">命令:</p>
        </div>
        <div className="h-[22px] flex items-center pl-1 bg-[#ebebeb]">
          <button aria-label="Recent commands" className="w-4 h-[14px] flex items-center justify-center border border-[#999] bg-[#c9cdd8]">
            <svg viewBox="0 0 12 10" className="w-3 h-[10px]" fill="none" stroke="#3d4458" strokeWidth="1.300">
              <path d="M2 1l3 4-3 4M6 9h5" />
            </svg>
          </button>
          <ArrowBtn className="w-[10px]" caret="w-[5px] h-[3px] text-[#777]" />
          <input aria-label="Command" placeholder="键入命令" className="flex-1 h-full pl-[7px] text-[13px] bg-transparent placeholder:text-[#9a9a9a]" />
        </div>
      </div>
    </div>
  );
}

function LayoutTabs() {
  const shape = '[clip-path:polygon(0_0,100%_0,90%_80%,80%_100%,20%_100%,10%_80%)] h-5 pb-[1px]';
  return (
    <div className="h-[22px] flex items-start pl-[10px] bg-[#404040] text-xs text-[#aaa]">
      <button className={clsx(shape, 'w-12 font-bold text-white bg-[#777]')}>模型</button>
      <button className={clsx(shape, 'w-[54px] bg-[#585858]')}>布局1</button>
      <button className={clsx(shape, 'w-[54px] bg-[#585858]')}>布局2</button>
      <button aria-label="New layout" className="w-[26px] h-5 ml-[2px] flex items-center justify-center bg-[#555] [clip-path:polygon(6px_0,100%_0,20px_100%,2px_100%)]">
        <svg viewBox="0 0 8 8" className="size-2"><path d="M4 0v8M0 4h8" stroke="#ccc" strokeWidth="1.500" /></svg>
      </button>
    </div>
  );
}

function StatusBar() {
  const sep = { 1: 'border-l border-[#858585]', 2: 'border-l-3 border-double border-[#909090]' };
  return (
    <div className="h-[27px] flex pl-[59px] bg-[#3f3f3f] text-xs text-gray-100">
      <div className="flex-1 flex items-stretch border-y border-[#777] bg-[#525252] my-px">
        <button className="w-[182px] shrink-0 pl-[7px] text-left border-l border-[#777] whitespace-nowrap">2973.8105, 1442.4908, 0.0000</button>
        <button className="w-8 shrink-0 font-bold border-x-3 border-double border-[#909090] whitespace-nowrap">模型</button>
        {STATUS.map((s, i) => {
          const cell = clsx(s.w, sep[s.sep], s.color);
          if (s.icon) return <Tool key={i} name={s.icon} className={cell} />;
          if (s.text) {
            return (
              <button key={i} className={clsx(cell, 'shrink-0 pl-1 text-left whitespace-nowrap', s.bold && 'font-bold')}>
                {s.text}
              </button>
            );
          }
          return <ArrowBtn key={i} className={cell} caret="w-[7px] h-1 text-white" />;
        })}
      </div>
    </div>
  );
}

export default function App() {
  return (
    <div className="h-screen min-w-[1280px] flex flex-col overflow-hidden bg-linear-to-r from-[#bcd4e4] via-[#cfe6ec] to-[#b4cde6] font-['Open_Sans','Noto_Sans_CJK_SC',sans-serif]">
      <header className="relative">
        <TitleBar />
        <button aria-label="Application menu" className="absolute left-[5px] top-2 w-[41px] h-[41px] flex items-center border border-[#161616] bg-linear-to-b from-[#a5a5a5] to-[#606060]">
          <svg viewBox="0 0 26 28" className="w-[26px] h-7 ml-[3px]">
            <path d="M9 1h7l8 25h-6l-2-5c-4-1-8 0-11 5H0z" fill="#c92c33" />
            <path d="M12 7l3 9c-2 0-4 0-6 1z" fill="#8a6a6a" />
            <path d="M9 1h4L5 26H0z" fill="#e04a4d" />
          </svg>
          <Caret className="w-[7px] h-1 ml-[1px] text-[#333]" />
        </button>
      </header>
      <main className="flex-1 min-h-0 ml-[5px] mr-[7px] flex flex-col border-r border-[#555]">
        <MenuBar />
        <FileTabs />
        <Toolbars />
        <WorkArea />
        <CommandLine />
        <LayoutTabs />
        <StatusBar />
      </main>
      <footer className="h-[7px] w-[500px] shrink-0 bg-[repeating-linear-gradient(90deg,#c3d8e6_0,#8fa3b8_20px,#8fa3b8_50px,#c3d8e6_70px)]" />
    </div>
  );
}
